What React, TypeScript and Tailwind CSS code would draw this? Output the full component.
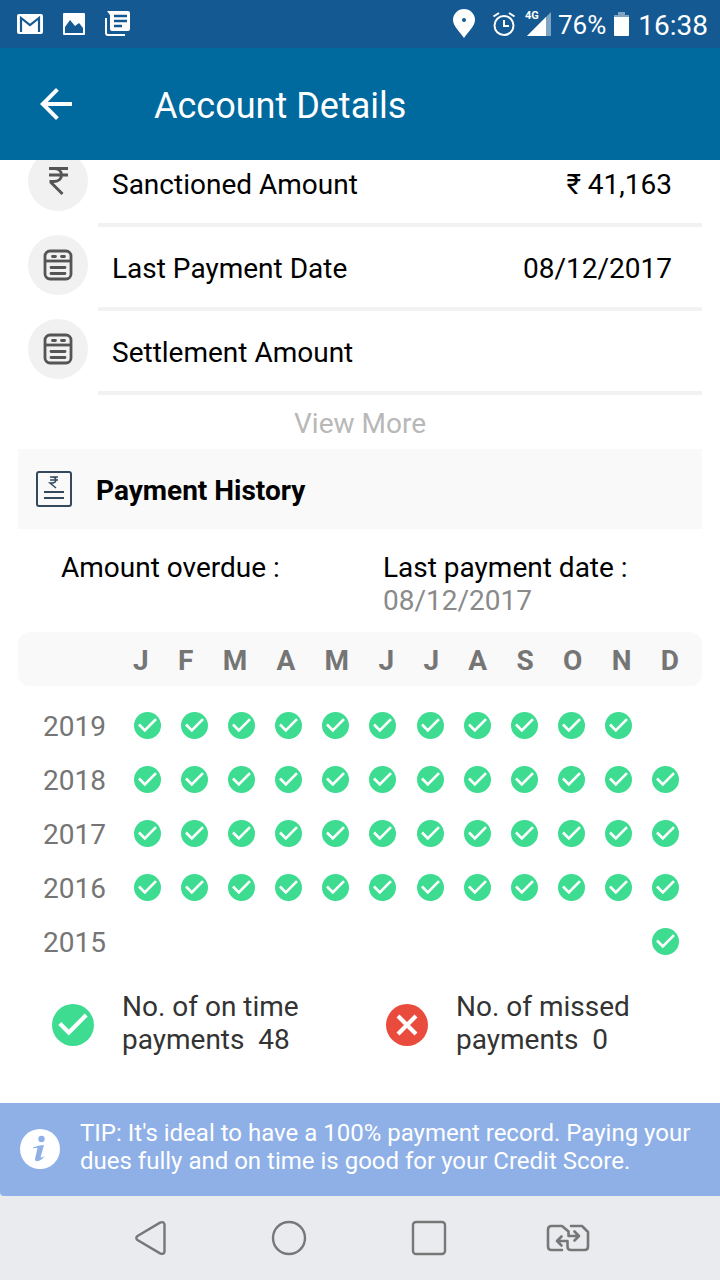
import { ReactNode } from 'react'

const MONTHS = ['J', 'F', 'M', 'A', 'M', 'J', 'J', 'A', 'S', 'O', 'N', 'D']

// first and last paid month of every year, zero based
const HISTORY = [
  { year: 2019, from: 0, to: 10 },
  { year: 2018, from: 0, to: 11 },
  { year: 2017, from: 0, to: 11 },
  { year: 2016, from: 0, to: 11 },
  { year: 2015, from: 11, to: 11 },
]

function CheckIcon({ className = '' }: { className?: string }) {
  return (
    <svg className={className} viewBox="2 2 20 20" role="img" aria-label="Paid">
      <circle cx="12" cy="12" r="10" fill="#3ddc91" />
      <path fill="#fff" d="M10 17l-5-5 1.41-1.41L10 14.17l7.59-7.59L19 8z" />
    </svg>
  )
}

function MissedIcon({ className = '' }: { className?: string }) {
  return (
    <svg className={className} viewBox="0 0 42 42" aria-hidden="true">
      <circle cx="21" cy="21" r="21" fill="#e94b3c" />
      <path d="M12 12l18 18M30 12L12 30" stroke="#fff" strokeWidth="4.2" />
    </svg>
  )
}

function RupeeIcon() {
  return (
    <svg className="w-8 h-8" viewBox="0 0 32 32" fill="none" stroke="#555" strokeWidth="3" aria-hidden="true">
      <path d="M7 3.500h19M7 10h19" />
      <path d="M8 3.500h4c10 0 10 13 0 13H9v1L20.500 29" />
    </svg>
  )
}

function CalendarIcon() {
  return (
    <svg className="w-8 h-8" viewBox="0 0 32 32" fill="none" stroke="#555" strokeWidth="2.8" aria-hidden="true">
      <rect x="3" y="2" width="26" height="28" rx="5" />
      <path d="M3 12h27" />
      <path d="M10.500 7.500h3M19.500 7.500h3M9 18.500h14M9 24.500h14" strokeLinecap="round" />
    </svg>
  )
}

function StatementIcon() {
  return (
    <svg className="w-9 h-9" viewBox="0 0 36 36" fill="none" stroke="#34495e" strokeWidth="2" aria-hidden="true">
      <rect x="1" y="1" width="34" height="34" rx="2" />
      <path d="M8 21h20M8 27h20" />
      <path d="M14 6h8M14 9h8M14 6h2c5 0 5 6 0 6h-2l6 5" strokeWidth="1.5" />
    </svg>
  )
}

function StatusBar() {
  return (
    <div className="flex items-center justify-between h-12 pl-4 pr-3 bg-[#155992] text-white">
      <div className="flex items-center gap-[18px]">
        <svg className="w-7 h-7" viewBox="0 0 28 28" aria-hidden="true">
          <rect x="1" y="4" width="26" height="20" rx="2" fill="#fff" />
          <path d="M5 22V8l9 7 9-7v14" fill="none" stroke="#155992" strokeWidth="2.2" />
        </svg>
        <svg className="w-6 h-6" viewBox="0 0 24 24" aria-hidden="true">
          <rect x="1" y="1" width="22" height="22" rx="1" fill="#fff" />
          <path d="M3 21v-6l5-7 5 6 4-3 4 5v5z" fill="#155992" />
        </svg>
        <svg className="w-7 h-7" viewBox="0 0 28 28" aria-hidden="true">
          <path d="M3 1h21a2 2 0 0 1 2 2v16a2 2 0 0 1-2 2H8a2 2 0 0 1-2-2V5z" fill="#fff" />
          <path d="M10 6h13M10 11h13M10 16h8" stroke="#155992" strokeWidth="2.4" />
          <path d="M2 8v15a2 2 0 0 0 2 2h17" fill="none" stroke="#fff" strokeWidth="2" />
        </svg>
      </div>
      <div className="flex items-center">
        <svg className="w-6 h-8 mr-4" viewBox="0 0 24 32" aria-hidden="true">
          <path d="M12 30C8 24 1 18 1 12a11 11 0 0 1 22 0c0 6-7 12-11 18z" fill="#fff" />
          <circle cx="12" cy="12" r="2" fill="#155992" />
        </svg>
        <svg className="w-6 h-6 mr-2" viewBox="0 0 24 24" fill="none" stroke="#fff" strokeWidth="2" aria-hidden="true">
          <circle cx="12" cy="13.5" r="9.5" />
          <path d="M12 8v6h5M1.500 4.500L7 1M22.500 4.500L17 1" />
        </svg>
        <svg className="w-7 h-7 mr-[6px]" viewBox="0 0 28 28" aria-hidden="true">
          <path d="M3 26L27 2v24z" fill="#fff" fillOpacity=".45" />
          <path d="M3 26L22 7v19z" fill="#fff" />
          <text x="1" y="9" fontFamily="Roboto" fontWeight="700" fontSize="11" fill="#fff">4G</text>
        </svg>
        <span className="mr-2 pt-0.5 text-[26px]">76%</span>
        <svg className="w-4 h-6 mr-2" viewBox="0 0 16 24" aria-hidden="true">
          <path d="M4 0h7v3h4v3H0V3h4z" fill="#fff" fillOpacity=".45" />
          <path d="M0 5h15v18a1 1 0 0 1-1 1H1a1 1 0 0 1-1-1z" fill="#fff" />
        </svg>
        <span className="pt-0.5 text-[28px]">16:38</span>
      </div>
    </div>
  )
}

function DetailRow({ icon, label, value }: { icon: ReactNode; label: string; value?: string }) {
  return (
    <div className="flex h-[84px]">
      <div className="flex items-center justify-center w-[60px] h-[60px] mx-[10px] mt-2 rounded-full bg-[#f1f1f1]">{icon}</div>
      <div className="flex flex-1 items-center justify-between pl-[14px] pr-[30px] pt-0.5 border-b-4 border-[#f2f2f2]">
        <dt>{label}</dt>
        <dd>{value}</dd>
      </div>
    </div>
  )
}

function PaymentTable() {
  return (
    <table className="block text-[#757575]">
      <thead className="block">
        <tr className="flex items-center justify-between h-[54px] pl-[115px] pr-[23px] pt-0.5 mb-3 rounded-xl bg-[#f9f9f9]">
          {MONTHS.map((month, i) => <th key={i} scope="col" className="font-bold">{month}</th>)}
        </tr>
      </thead>
      <tbody className="block">
        {HISTORY.map(({ year, from, to }) => (
          <tr key={year} className="flex items-center h-[54px] pl-[25px] pr-[13px]">
            <th scope="row" className="w-[81px] pt-0.5 text-left font-normal">{year}</th>
            {MONTHS.map((_, i) => (
              <td key={i} className="flex flex-1 justify-center">
                {i >= from && i <= to && <CheckIcon className="w-[27px] h-[27px]" />}
              </td>
            ))}
          </tr>
        ))}
      </tbody>
    </table>
  )
}

function NavBar() {
  return (
    <nav className="flex items-center h-[84px] pl-20 pr-[82px] bg-[#e9ebee]">
      <button aria-label="Back" className="flex flex-1 justify-center">
        <svg className="w-9 h-9" viewBox="0 0 36 36" fill="none" stroke="#777" strokeWidth="2.4">
          <path d="M5.500 16L28 2.600Q32 1 32.500 4.500v27Q32 35 28 33.400L5.500 20Q3 18 5.500 16z" />
        </svg>
      </button>
      <button aria-label="Home" className="flex flex-1 justify-center">
        <svg className="w-9 h-9" viewBox="0 0 36 36" fill="none" stroke="#777" strokeWidth="2.4">
          <circle cx="18" cy="18" r="16" />
        </svg>
      </button>
      <button aria-label="Recent apps" className="flex flex-1 justify-center">
        <svg className="w-9 h-9" viewBox="0 0 36 36" fill="none" stroke="#777" strokeWidth="2.4">
          <rect x="2" y="2" width="32" height="32" rx="3" />
        </svg>
      </button>
      <button aria-label="Switch SIM" className="flex flex-1 justify-center">
        <svg className="w-11 h-7" viewBox="0 0 44 28" fill="none" stroke="#777" strokeWidth="2.6" strokeLinecap="round" strokeLinejoin="round">
          <path d="M16 26H5.500Q2 26 2 22.500V5.500Q2 2 5.500 2H16l6.500 5.500V12H33M28.500 7.500L33 12l-4.500 4.500" />
          <path d="M25 2h11l6 6v14.500Q42 26 38.500 26H25Q21.500 26 21.500 22.500V17H11M15.500 12.500L11 17l4.500 4.500" />
        </svg>
      </button>
    </nav>
  )
}

export default function App() {
  return (
    <div className="flex flex-col min-h-screen bg-white font-[Roboto,sans-serif] text-[28px] leading-[33px] text-black">
      <StatusBar />
      <header className="flex items-center h-28 pl-8 bg-[#00699e] text-white">
        <button aria-label="Go back">
          <svg className="w-12 h-12" viewBox="0 0 24 24" fill="#fff">
            <path d="M20 11H7.830l5.590-5.590L12 4l-8 8 8 8 1.410-1.410L7.830 13H20v-2z" />
          </svg>
        </button>
        <h1 className="ml-[74px] pt-1 text-[36px] leading-[42px]">Account Details</h1>
      </header>

      <main className="flex-1 px-[18px] overflow-hidden">
        {/* list is scrolled a little under the header */}
        <dl className="-mt-[17px]">
          <DetailRow icon={<RupeeIcon />} label="Sanctioned Amount" value="₹ 41,163" />
          <DetailRow icon={<CalendarIcon />} label="Last Payment Date" value="08/12/2017" />
          <DetailRow icon={<CalendarIcon />} label="Settlement Amount" />
        </dl>
        <button className="block w-full h-[54px] pt-0.5 text-[#b8b8b8]">View More</button>

        <div className="flex items-center gap-6 h-20 px-[18px] bg-[#f9f9f9]">
          <StatementIcon />
          <h2 className="pt-0.5 font-bold">Payment History</h2>
        </div>

        <div className="grid grid-cols-[322px_1fr] pl-[43px] pt-[22px] pb-[15px]">
          <p>Amount overdue :</p>
          <div>
            <p>Last payment date :</p>
            <p className="text-[#8a8a8a]">08/12/2017</p>
          </div>
        </div>

        <PaymentTable />

        <div className="grid grid-cols-[334px_1fr] pl-[34px] pt-[22px] pb-[43px] text-[#333]">
          <div className="flex items-center gap-7">
            <CheckIcon className="w-[42px] h-[42px]" />
            <p className="pb-1">No. of on time<br />payments&nbsp; 48</p>
          </div>
          <div className="flex items-center gap-7">
            <MissedIcon className="w-[42px] h-[42px]" />
            <p className="pb-1">No. of missed<br />payments&nbsp; 0</p>
          </div>
        </div>
      </main>

      <aside className="bg-[#e9ebee]">
        <div className="flex items-center gap-5 min-h-[93px] px-5 pb-0.5 rounded-bl-sm bg-[#8eb0e7] text-white">
          <svg className="w-10 h-10 shrink-0" viewBox="0 0 40 40" aria-hidden="true">
            <circle cx="20" cy="20" r="20" fill="#fff" />
            <circle cx="21.5" cy="10" r="3.2" fill="#8eb0e7" />
            <path d="M13 18.500Q18 16 24 16L20.500 28.500Q22.500 28.500 25 27 21 32 17 32.300 14.500 32.300 15.200 29L17.500 19Q16 18.300 13 19.500z" fill="#8eb0e7" />
          </svg>
          <p className="pb-1 text-2xl leading-7">TIP: It's ideal to have a 100% payment record. Paying your dues fully and on time is good for your Credit Score.</p>
        </div>
      </aside>
      <NavBar />
    </div>
  )
}
